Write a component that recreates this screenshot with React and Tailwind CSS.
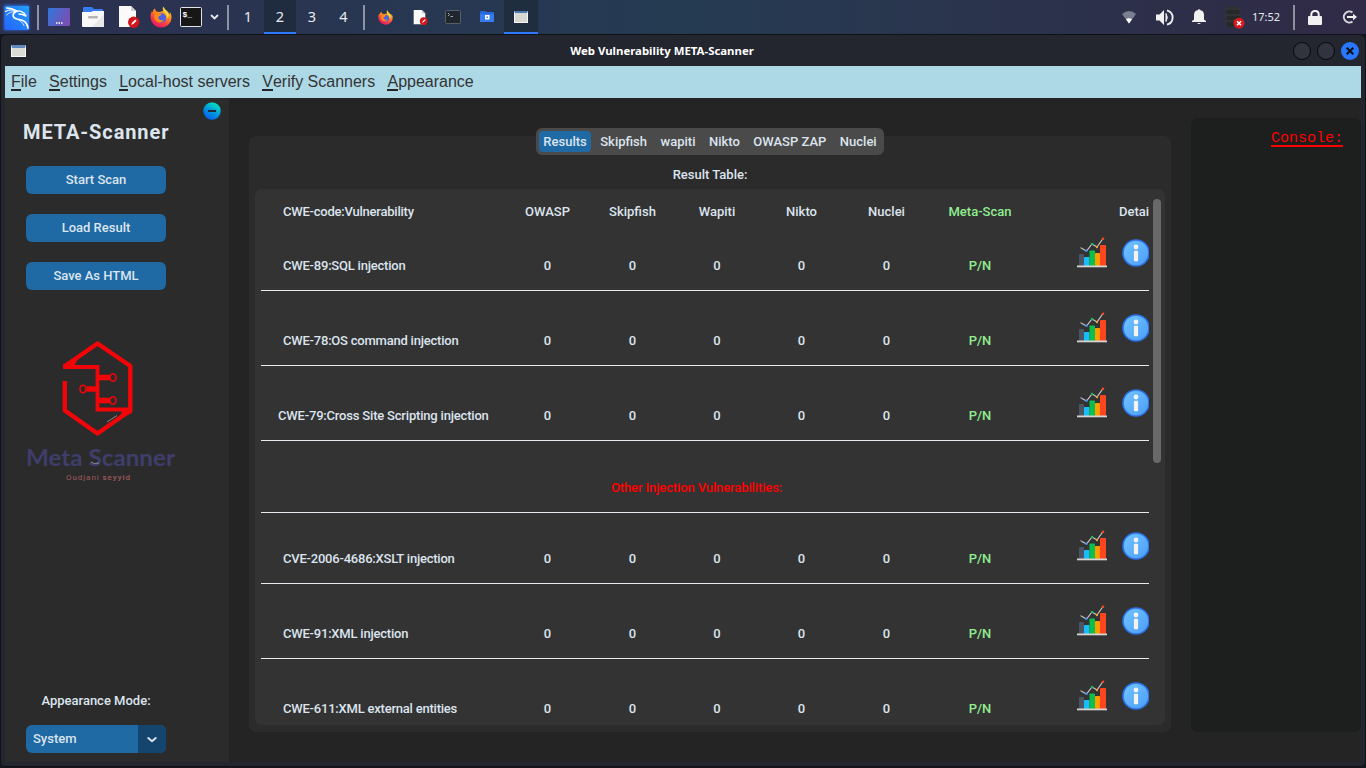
import React from "react";

function Underlined({ text }) {
  return (
    <span className="relative">
      <span className="relative">
        {text[0]}
        <span className="absolute bottom-[-1px] left-0 h-[2px] w-full bg-[#252525]" />
      </span>
      {text.slice(1)}
    </span>
  );
}

function KaliLogo() {
  return (
    <svg width="32" height="32" viewBox="0 0 32 32" className="shrink-0">
      <defs>
        <linearGradient id="kali" x1="0" y1="1" x2="1" y2="0">
          <stop offset="0" stopColor="#2563ff" />
          <stop offset="1" stopColor="#22a0ff" />
        </linearGradient>
        <filter id="glow" x="-30%" y="-30%" width="160%" height="160%">
          <feGaussianBlur stdDeviation="1.6" />
        </filter>
      </defs>
      <rect x="4" y="4" width="25" height="25" fill="#2d7dff" filter="url(#glow)" opacity=".8" />
      <rect x="4.500" y="5" width="24.500" height="24" rx="1" fill="url(#kali)" />
      <g fill="none" stroke="#fff" strokeLinecap="round" strokeLinejoin="round">
        <path d="M6.500 7C11 7 14.500 8.500 17 10.500" strokeWidth="1.300" />
        <path d="M5.500 10.500C9 8.500 13 8.500 17 10.500" strokeWidth="1.300" />
        <path d="M6.500 14C9 11.500 12 10.500 15 10.500" strokeWidth=".8" />
        <path d="M16 10C20 9.500 22 10.500 24 12L26 15L22.500 13.500L19 13" strokeWidth="1.400" />
        <path d="M16 10.500C11.500 13 12.500 17 17 18C23 19 27 20.500 28 27" strokeWidth="1.600" />
        <path d="M17 18C21 20 23 22 24 24.500" strokeWidth="0.800" />
      </g>
    </svg>
  );
}

function Firefox({ size }) {
  return (
    <svg width={size} height={size} viewBox="0 0 22 22" className="shrink-0">
      <defs>
        <linearGradient id="fox" x1=".85" y1="0" x2=".3" y2="1">
          <stop offset="0" stopColor="#fff44f" />
          <stop offset=".35" stopColor="#ff9a1f" />
          <stop offset=".65" stopColor="#ff4a3d" />
          <stop offset="1" stopColor="#e3106a" />
        </linearGradient>
      </defs>
      <path d="M13.500 .5C12.500 2 12.500 3.500 13.500 5L9 6L6.500 5.500C5.500 4.500 5 3.500 5 2.500C3.500 3.500 2.700 5 2.500 6.500L1.800 5.500C.5 7.500 .3 10 .8 13C2 18 6 21.500 11 21.500C17 21.500 21.500 17 21.500 11.500C21.500 9 20.800 7 19.500 5.500C20 7 20 8 19.500 8.500C18.500 5 14.500 4 13.500 .5Z" fill="url(#fox)" />
      <circle cx="11.500" cy="12" r="4.700" fill="#4a62e8" />
      <path d="M2.500 6.500C5 5.500 7.500 6 9 7.500L11.500 8C11 10 9 10 8 11C8.500 14 11 15 14 13.500C12 18 6 17 4.500 13C4 10.500 4.500 9 5.500 8.500Z" fill="#ff8b16" />
      <path d="M13.500 5C16.500 7 17.500 10 16.500 13C18.500 11 19 9.500 18.500 7.500C17 5 14 4 13.500 .5Z" fill="#ffd83c" />
    </svg>
  );
}

function EditorIcon({ size }) {
  return (
    <svg width={size} height={size} viewBox="0 0 22 22" className="shrink-0">
      <path d="M1 0H13L18 5V21H1Z" fill="#fafafa" />
      <path d="M13 0L18 5H13Z" fill="#cfcfcf" />
      <circle cx="15.700" cy="16.300" r="5.700" fill="#d3161b" />
      <path d="M13.300 18.700L14 16.700L17.300 13.400L18.600 14.700L15.300 18Z" fill="#fff" />
    </svg>
  );
}

function Taskbar() {
  return (
    <header className="flex h-[34px] w-full shrink-0 items-center bg-gradient-to-r from-[#2c3050] via-[#243b52] to-[#302a46] font-normal text-[#e8eaf0]">
      <KaliLogo />
      <div className="ml-[5px] h-[25px] w-[2px] bg-[#8e93a4]" />
      <svg className="ml-[9px]" width="22" height="18" viewBox="0 0 22 18">
        <defs>
          <linearGradient id="desk" x1="0" y1="0" x2="1" y2=".4">
            <stop offset="0" stopColor="#2f78de" />
            <stop offset="1" stopColor="#7750b4" />
          </linearGradient>
        </defs>
        <rect width="22" height="18" rx="1" fill="url(#desk)" />
        <path d="M8 15h1.500M10.500 15H12M13 15h1.500" stroke="#fff" strokeWidth="1.500" />
      </svg>
      <svg className="ml-[12px]" width="22" height="20" viewBox="0 0 22 20">
        <path d="M1 1Q1 0 2 0H10L12 2H20Q21 2 21 3V8H1Z" fill="#367bf0" />
        <path d="M0 5H9L11 4H22V19Q22 20 21 20H1Q0 20 0 19Z" fill="#f8f8f8" />
        <path d="M22 7V20H10Z" fill="#e9e9e9" />
        <rect x="6" y="9" width="10" height="2.500" rx="1.200" fill="#b5b5b5" />
      </svg>
      <div className="ml-[14px] flex"><EditorIcon size={22} /></div>
      <div className="ml-[10px] flex"><Firefox size={22} /></div>
      <svg className="ml-[8px]" width="22" height="20" viewBox="0 0 22 20">
        <rect x=".5" y=".5" width="21" height="19" rx="1" fill="#171717" stroke="#e4e4e4" />
        <text x="2.500" y="10" fontFamily="Liberation Mono" fontWeight="700" fontSize="8" fill="#fff">$_</text>
      </svg>
      <svg className="ml-[8px]" width="9" height="6" viewBox="0 0 9 6">
        <path d="M1 1L4.500 4.500L8 1" fill="none" stroke="#e6e8ee" strokeWidth="1.800" />
      </svg>
      <div className="ml-[8px] h-[25px] w-[2px] bg-[#8e93a4]" />
      <nav className="ml-[3px] flex h-full font-['Noto_Sans',sans-serif] text-[14.5px]">
        <span className="flex w-8 items-center justify-center">1</span>
        <span className="flex w-8 items-center justify-center border-b-2 border-[#2f79ff] bg-[#1f2c40] pt-[2px]">2</span>
        <span className="flex w-8 items-center justify-center">3</span>
        <span className="flex w-[31px] items-center justify-center">4</span>
      </nav>
      <div className="ml-[4px] h-[25px] w-[2px] bg-[#8e93a4]" />
      <div className="ml-[13px] flex"><Firefox size={15} /></div>
      <div className="ml-[20px] flex"><EditorIcon size={15} /></div>
      <svg className="ml-[17px]" width="16" height="14" viewBox="0 0 16 14">
        <rect x=".5" y=".5" width="15" height="13" rx="1" fill="#1f262d" stroke="#566068" />
        <path d="M3 3L4.500 4.500L3 6M5.500 6.500H8" fill="none" stroke="#aeb5bc" strokeWidth=".9" />
      </svg>
      <svg className="ml-[19px]" width="14" height="12" viewBox="0 0 14 12">
        <path d="M0 1Q0 0 1 0H5L7 1H13Q14 1 14 2V11H0Z" fill="#2867dc" />
        <path d="M0 3H14V11H0Z" fill="#367bf0" />
        <rect x="5" y="4" width="4.500" height="4.500" fill="#fff" />
        <rect x="6.500" y="5.500" width="1.500" height="1.500" fill="#367bf0" />
      </svg>
      <div className="ml-[10px] flex h-full w-[34px] items-center justify-center border-b-2 border-[#2f79ff] bg-[#1e2e3e] pt-[2px]">
        <div className="h-[12px] w-[14px] border border-t-2 border-[#f5f5f5] border-t-[#4b78b5] bg-[#d8d8d2]" />
      </div>
      <div className="ml-auto flex h-full items-center">
        <svg width="14" height="13" viewBox="0 0 14 13">
          <path d="M0 3Q7-3 14 3L7 12.500Z" fill="#777f90" />
          <path d="M4 8.200Q7 6.500 10 8.200L7 12.500Z" fill="#fff" />
        </svg>
        <svg className="ml-[20px]" width="18" height="17" viewBox="0 0 18 17">
          <path d="M0 5.500H3.500L8 1V16L3.500 11.500H0Z" fill="#f1f1f1" />
          <path d="M10 4.500Q12.500 8.500 10 12.500Z" fill="#f1f1f1" stroke="#f1f1f1" />
          <path d="M11 1.300C18.500 3.500 18.500 13.500 11 15.700" fill="none" stroke="#f1f1f1" strokeWidth="1.900" />
        </svg>
        <svg className="ml-[18px]" width="14" height="16" viewBox="0 0 14 16">
          <path d="M0 13V12L2 10.500V6Q2 2 5.500 1.300Q7-1 8.500 1.300Q12 2 12 6V10.500L14 12V13ZM5 14H9Q7 16 5 14Z" fill="#f1f1f1" />
        </svg>
        <svg className="ml-[19px] mr-px" width="20" height="23" viewBox="0 0 20 23">
          <path d="M4 1H12V2H15V21H1V2H4Z" fill="#272829" stroke="#333539" strokeWidth=".8" />
          <path d="M1 3H15M1 9H15M1 15H15" stroke="#3b3c3f" />
          <circle cx="14" cy="17.200" r="5.500" fill="#d71920" />
          <path d="M12 15.200L16 19.200M16 15.200L12 19.200" stroke="#fff" strokeWidth="1.600" />
        </svg>
        <span className="ml-[6px] w-[28px] whitespace-nowrap font-['Noto_Sans',sans-serif] text-[11px]">17:52</span>
        <div className="ml-[13px] h-[25px] w-[2px] bg-[#8e8f9f]" />
        <svg className="ml-[13px]" width="14" height="15" viewBox="0 0 14 15">
          <rect y="6" width="14" height="9" rx="1" fill="#f1f1f1" />
          <path d="M3.300 7V4.500C3.300 -.3 10.700 -.3 10.700 4.500V7" fill="none" stroke="#f1f1f1" strokeWidth="2" />
        </svg>
        <svg className="ml-[20px] mr-[9px]" width="15" height="14" viewBox="0 0 15 14">
          <path d="M10.500 2.500A5.500 5.500 0 1 0 10.500 11.500" fill="none" stroke="#d8d8dc" strokeWidth="2" />
          <path d="M5 7H12" stroke="#eee" strokeWidth="2" />
          <path d="M11 3.800L15 7L11 10.200Z" fill="#eee" />
        </svg>
      </div>
    </header>
  );
}

function Titlebar() {
  return (
    <div className="flex h-[31px] shrink-0 items-center justify-between pl-[6px] pr-[2px]">
      <div className="flex w-[22px]">
        <div className="h-[12px] w-[15px] border border-t-[3px] border-[#fafafa] border-t-[#6289bd] bg-[#dcdcd7]" />
      </div>
      <span className="font-['Noto_Sans',sans-serif] text-[11.4px] font-bold text-white">Web Vulnerability META-Scanner</span>
      <div className="flex w-[68px] justify-end gap-[6px]">
        <span className="size-[18px] rounded-full border border-[#08090c] bg-[#31343f]" />
        <span className="size-[18px] rounded-full border border-[#08090c] bg-[#31343f]" />
        <svg width="18" height="18" viewBox="0 0 18 18">
          <circle cx="9" cy="9" r="9" fill="#2777ff" />
          <path d="M5.700 5.700L12.300 12.300M12.300 5.700L5.700 12.300" stroke="#11131a" strokeWidth="2.200" />
        </svg>
      </div>
    </div>
  );
}

function Logo() {
  return (
    <svg width="160" height="150" viewBox="20 335 160 150" className="ml-[15px] mt-[45px] block">
      <g fill="none" stroke="#f20508">
        <path d="M64.800 381V410.500L97.500 433.500L130.300 410.500V366L97.500 343.500L65 366" strokeWidth="4.400" strokeLinejoin="round" />
        <path d="M63 367H97.500V409.500H130" strokeWidth="3.800" />
        <path d="M98 377.500H110M86.500 389H97M98 400.500H110" strokeWidth="5.600" />
        <ellipse cx="113" cy="377.500" rx="3" ry="3.800" strokeWidth="1.600" fill="#2b2b2b" />
        <ellipse cx="83" cy="389" rx="3" ry="3.800" strokeWidth="1.600" fill="#2b2b2b" />
        <ellipse cx="113" cy="400.500" rx="3" ry="3.800" strokeWidth="1.600" fill="#2b2b2b" />
      </g>
      <path d="M63 369V364.500L78 359L74 366ZM132 408V413L119 419L122 411Z" fill="#f20508" />
      <path d="M107 422L117 415.500" stroke="#b7aaaa" strokeWidth=".7" />
      <text x="26" y="466" textLength="149" lengthAdjust="spacingAndGlyphs" fontFamily="Lato" fontWeight="700" fontSize="22" fill="#3f3e6b">Meta Scanner</text>
      <path d="M91 462Q94 464.500 99 463" fill="none" stroke="#aaa" strokeWidth=".7" />
      <text x="66" y="480" textLength="64" fontFamily="Roboto" fontWeight="400" fontSize="8" fill="#a05a5c">Oudjani <tspan fontWeight="500">seyyid</tspan></text>
    </svg>
  );
}

function Sidebar() {
  return (
    <aside className="flex w-[224px] shrink-0 flex-col bg-[#2b2b2b]">
      <div className="flex h-[22px] justify-end pr-[8px] pt-[4px]">
        <svg width="18" height="18" viewBox="0 0 18 18">
          <defs>
            <linearGradient id="minus" x1=".2" y1="1" x2=".8" y2="0">
              <stop offset="0" stopColor="#0557f0" />
              <stop offset=".5" stopColor="#009bdc" />
              <stop offset="1" stopColor="#00edb5" />
            </linearGradient>
          </defs>
          <circle cx="9" cy="9" r="8.700" fill="url(#minus)" />
          <path d="M5 9H13" stroke="#202b36" strokeWidth="2" />
        </svg>
      </div>
      <h1 className="ml-[18px] h-[28px] whitespace-nowrap text-[20px] font-bold leading-[25px] tracking-[0.9px]">META-Scanner</h1>
      <div className="ml-[21px] mt-[18px] flex w-[140px] flex-col gap-5">
        {["Start Scan", "Load Result", "Save As HTML"].map((t) => (
          <button key={t} className="h-[28px] rounded-[6px] bg-[#1f6aa5]">{t}</button>
        ))}
      </div>
      <Logo />
      <div className="mt-auto ml-[21px] w-[140px] pb-[9px]">
        <div className="mb-[14px] text-center leading-[20px]">Appearance Mode:</div>
        <div className="flex h-[28px] overflow-hidden rounded-[6px] bg-[#1f6aa5]">
          <span className="flex flex-1 items-center pl-[7px]">System</span>
          <span className="flex w-[28px] items-center justify-center bg-[#14456e] pt-[2px]">
            <svg width="10" height="6" viewBox="0 0 10 6">
              <path d="M1.300 1L5 4.300L8.700 1" fill="none" stroke="#dce4ee" strokeWidth="1.900" strokeLinecap="round" strokeLinejoin="round" />
            </svg>
          </span>
        </div>
      </div>
    </aside>
  );
}

function ChartIcon() {
  return (
    <svg width="30" height="31" viewBox="0 0 30 31" className="shrink-0">
      <rect x="2" y="17" width="5" height="12" rx=".7" fill="#4a5462" />
      <rect x="7" y="20" width="5.500" height="9" rx=".7" fill="#18bdfa" />
      <rect x="12.500" y="13.500" width="5.500" height="15.500" rx=".7" fill="#09c04e" />
      <rect x="18" y="16" width="5" height="13" rx=".7" fill="#ff9d00" />
      <rect x="23" y="8" width="6" height="21" rx=".7" fill="#ff4420" />
      <path d="M4 11L9.500 14L15 7L20 10L26 1.500" fill="none" stroke="#c7c7c7" strokeWidth="1.200" />
      <circle cx="4" cy="10.800" r="1" fill="#69717d" />
      <circle cx="9.500" cy="13.800" r="1.200" fill="#3f8df5" />
      <circle cx="15" cy="7" r="1.200" fill="#0fc057" />
      <circle cx="20" cy="10" r="1.200" fill="#eca52d" />
      <circle cx="26" cy="1.800" r="1.300" fill="#ff4420" />
      <rect y="28.500" width="30" height="1.800" fill="#d9d5d4" />
    </svg>
  );
}

function InfoIcon() {
  return (
    <svg width="28" height="28" viewBox="0 0 28 28" className="shrink-0">
      <defs>
        <linearGradient id="info" x1="0" y1="0" x2="1" y2="1">
          <stop offset="0" stopColor="#71c5ff" />
          <stop offset="1" stopColor="#4c9df8" />
        </linearGradient>
      </defs>
      <circle cx="14" cy="14" r="13.800" fill="#2a72ee" />
      <circle cx="14" cy="14" r="12.200" fill="url(#info)" />
      <circle cx="14" cy="8" r="2.400" fill="#f3f3f3" />
      <rect x="11.900" y="11.800" width="4.200" height="10.500" rx="1" fill="#f3f3f3" />
    </svg>
  );
}

const columns = "grid grid-cols-[244px_85px_85px_84px_85px_85px_102px_46px_45px_27px] w-[888px]";

function Row({ label, wide, height }) {
  return (
    <div className={`${columns} ${height} shrink-0 items-end overflow-hidden border-b border-[#e6eaef] text-center leading-[20px]`}>
      <span className={`mb-[14px] whitespace-nowrap text-left ${wide ? "pl-[17px] tracking-[-0.19px]" : "pl-[22px] tracking-[-0.22px]"}`}>{label}</span>
      {[0, 1, 2, 3, 4].map((i) => (
        <span key={i} className="mb-[14px]">0</span>
      ))}
      <span className="mb-[14px] text-[#90ee90]">P/N</span>
      <span />
      <span className="mb-[22px] flex"><ChartIcon /></span>
      <span className="mb-[23px] flex overflow-hidden"><InfoIcon /></span>
    </div>
  );
}

function Results() {
  return (
    <main className="flex w-[922px] shrink-0 flex-col items-center pt-[30px]">
      <div className="relative z-10 flex h-[27px] items-center gap-[5.5px] rounded-[6px] bg-[#4a4a4a] px-[3px]">
        <span className="rounded-[4px] bg-[#1f6aa5] px-[4px] leading-[21px]">Results</span>
        {["Skipfish", "wapiti", "Nikto", "OWASP ZAP", "Nuclei"].map((t) => (
          <span key={t} className="px-[4px] leading-[21px]">{t}</span>
        ))}
      </div>
      <div className="-mt-[19px] flex h-[596px] w-full flex-col rounded-[7px] bg-[#2b2b2b] px-[6px] pt-[29px]">
        <div className="h-[24px] shrink-0 text-center leading-[20px]">Result Table:</div>
        <div className="flex h-[536px] shrink-0 overflow-hidden rounded-[7px] bg-[#333333] pl-[6px]">
          <div className="flex w-[888px] shrink-0 flex-col overflow-hidden">
            <div className={`${columns} h-[27px] shrink-0 pt-[13px] text-center leading-[20px]`}>
              <span className="pl-[22px] text-left tracking-[-0.23px]">CWE-code:Vulnerability</span>
              <span>OWASP</span>
              <span>Skipfish</span>
              <span>Wapiti</span>
              <span>Nikto</span>
              <span>Nuclei</span>
              <span className="text-[#90ee90]">Meta-Scan</span>
              <span />
              <span className="col-span-2 overflow-hidden whitespace-nowrap pl-[42px] text-left">Detai</span>
            </div>
            <Row label="CWE-89:SQL injection" height="h-[75px]" />
            <Row label="CWE-78:OS command injection" height="h-[75px]" />
            <Row label="CWE-79:Cross Site Scripting injection" wide height="h-[75px]" />
            <div className="h-[72px] w-full shrink-0 border-b border-[#e6eaef] pt-[37px] text-center leading-[20px] tracking-[-0.12px] text-[#ff0000]">
              <span className="pr-[17px]">Other Injection Vulnerabilities:</span>
            </div>
            <Row label="CVE-2006-4686:XSLT injection" height="h-[71px]" />
            <Row label="CWE-91:XML injection" height="h-[75px]" />
            <Row label="CWE-611:XML external entities" height="h-[75px]" />
          </div>
          <div className="ml-[4px] mt-[10px] h-[264px] w-[8px] rounded-full bg-[#696969]" />
        </div>
      </div>
    </main>
  );
}

export default function App() {
  return (
    <div className="flex h-[768px] w-[1366px] flex-col overflow-hidden bg-[#15171d] font-['Roboto',sans-serif] text-[13px] font-medium text-[#dce4ee]">
      <Taskbar />
      <section className="flex h-[733px] flex-col rounded-t-[6px] rounded-b-[5px] border border-[#101218] bg-[#23252f] px-[4px] pb-[4px]">
        <Titlebar />
        <div className="flex h-[32px] shrink-0 items-center gap-[12.3px] bg-[#add8e6] px-[6px] font-['Liberation_Sans',sans-serif] text-[16px] font-normal text-[#333]">
          {["File", "Settings", "Local-host servers", "Verify Scanners", "Appearance"].map((t) => (
            <Underlined key={t} text={t} />
          ))}
        </div>
        <div className="flex min-h-0 flex-1 bg-[#242424]">
          <Sidebar />
          <div className="ml-[20px] flex"><Results /></div>
          <aside className="ml-[20px] mt-[20px] flex h-[614px] w-[170px] justify-end rounded-[7px] bg-[#1d1e1e] pr-[18px] pt-[10px]">
            <span className="h-[19px] border-b-2 border-[#ff0000] font-['Liberation_Mono',monospace] text-[15px] font-normal leading-[21px] text-[#ff0000]">Console:</span>
          </aside>
        </div>
      </section>
    </div>
  );
}
